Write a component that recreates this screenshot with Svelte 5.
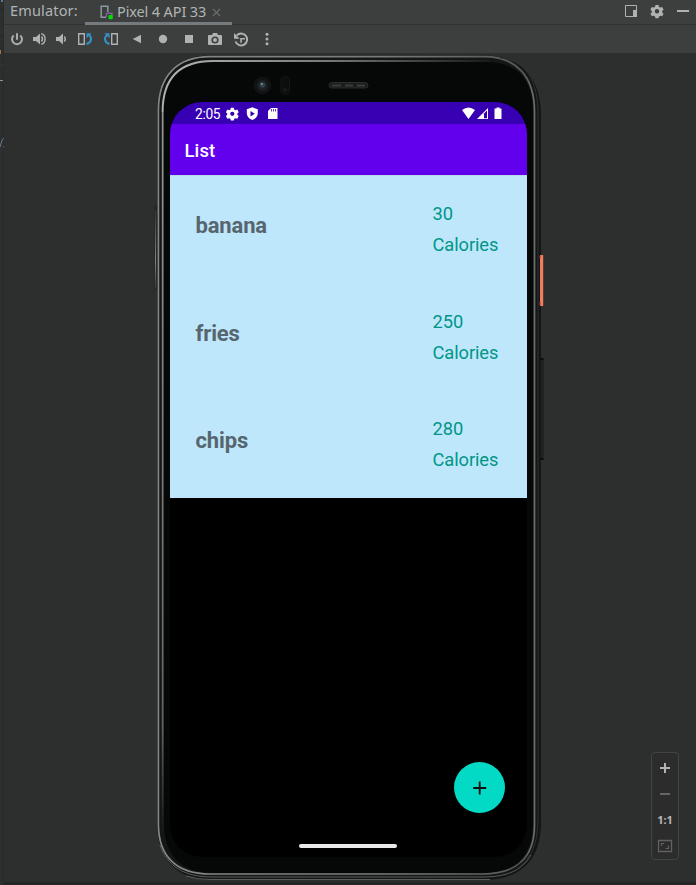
<script>
  const foods = [
    { name: 'banana', calories: 30 },
    { name: 'fries', calories: 250 },
    { name: 'chips', calories: 280 }
  ];
  const gear = 'M-1.5-6h3l.5 1.9 1.2.7 1.9-.6 1.5 2.6-1.4 1.4v1.4l1.4 1.3-1.5 2.6-1.9-.5-1.2.6-.5 1.9h-3l-.5-1.9-1.2-.6-1.9.5-1.5-2.6 1.4-1.3V0l-1.4-1.4 1.5-2.6 1.9.6 1.2-.7ZM0-1.9A2.2 2.2 0 1 0 0 2.5 2.2 2.2 0 1 0 0-1.9Z';
</script>

<div class="window">
  <aside class="gutter">
    <svg width="4" height="885" viewBox="0 0 4 885">
      <path d="M0 9.500h4M0 36.500h4" stroke="#262727" />
      <path d="M0 65h4" stroke="#343636" />
      <path d="M1 0h2v2H1Z" fill="#587991" />
      <path d="M0 50h1v4H0Z" fill="#aa6c44" />
      <path d="M0 80.500h3" stroke="#8c9298" />
      <path d="M0 147l2.500-8M3 138.500h1M3 147h1" fill="none" stroke="#657b91" />
    </svg>
  </aside>
  <main>
    <header>
      <span class="title">Emulator:</span>
      <div class="tab">
        <svg width="14" height="16" viewBox="0 0 14 16">
          <path d="M6 13.300H1.200V2.200h6.600V8" fill="none" stroke="#8d99a1" stroke-width="1.500" />
          <path d="M6.500 13V9.300h5.400V12" fill="none" stroke="#7d6099" stroke-width="1.400" />
          <rect x="8.500" y="11" width="4.300" height="4.300" rx="1" fill="#00df00" />
        </svg>
        <span class="tabname">Pixel 4 API 33</span>
        <svg class="close" width="9" height="9" viewBox="0 0 9 9"><path d="m1 1 7 7m0-7L1 8" stroke="#6b6f70" stroke-width="1.100" /></svg>
      </div>
      <div class="actions">
        <svg viewBox="-13 -12 26 24"><path d="M-5.500-5.500h11v11h-11Z" fill="none" stroke="#afb1b3" /><path d="M2-1h4v7H2Z" fill="#afb1b3" /></svg>
        <svg viewBox="-13 -12 26 24"><path d={gear} fill="#afb1b3" fill-rule="evenodd" /></svg>
        <svg viewBox="-13 -12 26 24"><path d="M-6-1H6V1H-6Z" fill="#afb1b3" /></svg>
      </div>
    </header>

    <div class="toolbar">
      <svg class="narrow" viewBox="-11 -14 22 28"><path d="M-3.300-3.500A5 5 0 1 0 3.300-3.500M0-5.800V.7" fill="none" stroke="#afb1b3" stroke-width="1.900" /></svg>
      <svg class="narrow" viewBox="-11 -14 22 28"><path d="M-6-2h3l4-3.500v11L-3 2h-3Z" fill="#afb1b3" /><path d="M2.500-2.500q2 2.500 0 5M2.300-5.200c5 1 5 9.400 0 10.400" fill="none" stroke="#afb1b3" stroke-width="1.400" /></svg>
      <svg class="narrow" viewBox="-11 -14 22 28"><path d="M-5-2h3l4-3.500v11L-2 2h-3Z" fill="#afb1b3" /><path d="M3.300-2.500q2 2.500 0 5" fill="none" stroke="#afb1b3" stroke-width="1.400" /></svg>
      <svg viewBox="-13 -14 26 28"><path d="M-6.300-5.300h5.600V5.300h-5.600Z" fill="none" stroke="#afb1b3" stroke-width="1.400" /><path d="M1.500 5c5-1.500 5.500-5.500 3-9" fill="none" stroke="#3592c4" stroke-width="2.100" /><path d="M1.500-5.800h5l-5 5Z" fill="#3592c4" /></svg>
      <svg viewBox="-13 -14 26 28"><path d="M6.300-5.300H.7V5.300h5.600Z" fill="none" stroke="#afb1b3" stroke-width="1.400" /><path d="M-1.500 5c-5-1.500-5.500-5.500-3-9" fill="none" stroke="#3592c4" stroke-width="2.100" /><path d="M-1.500-5.800h-5l5 5Z" fill="#3592c4" /></svg>
      <svg viewBox="-13 -14 26 28"><path d="M-4.300 0 4-4.300v8.600Z" fill="#afb1b3" /></svg>
      <svg viewBox="-13 -14 26 28"><circle r="4.200" fill="#afb1b3" /></svg>
      <svg viewBox="-13 -14 26 28"><path d="M-4-4h8v8h-8Z" fill="#afb1b3" /></svg>
      <svg viewBox="-13 -14 26 28"><path d="M-6-4h3l1-2h4l1 2h3q1 0 1 1v8q0 1-1 1H-6q-1 0-1-1v-8q0-1 1-1ZM0-2.600A3.600 3.600 0 1 0 0 4.600 3.600 3.600 0 1 0 0-2.600Z" fill="#afb1b3" fill-rule="evenodd" /><circle cy="1" r="2" fill="#afb1b3" /></svg>
      <svg viewBox="-13 -14 26 28"><path d="M-4.400-3.500A6 6 0 1 1-5.500 2.500" fill="none" stroke="#afb1b3" stroke-width="1.900" /><path d="M-7-6v5.700h5.700ZM-.8-1h4.800V.6H.8v3.200H-.8Z" fill="#afb1b3" /></svg>
      <svg viewBox="-13 -14 26 28"><g fill="#afb1b3"><circle cy="-4.700" r="1.500" /><circle r="1.500" /><circle cy="4.700" r="1.500" /></g></svg>
    </div>

    <section class="stage">
      <div class="phone">
        <svg class="shell" width="392" height="828" viewBox="153 54 392 828">
          <defs>
            <linearGradient id="edge" gradientUnits="userSpaceOnUse" x1="157" y1="0" x2="540" y2="0"><stop stop-color="#858787" /><stop offset=".6" stop-color="#777979" /><stop offset=".95" stop-color="#55585a" /><stop offset="1" stop-color="#747677" /></linearGradient>
            <linearGradient id="inner" gradientUnits="userSpaceOnUse" x1="160" y1="60" x2="470" y2="150"><stop stop-color="#b5b6b6" /><stop offset=".5" stop-color="#777979" /><stop offset="1" stop-color="#151616" /></linearGradient>
            <linearGradient id="rail" x1="0" y1="0" x2="0" y2="1"><stop stop-color="#949696" /><stop offset=".85" stop-color="#626464" /><stop offset="1" stop-color="#111313" /></linearGradient>
            <linearGradient id="side" x1="0" y1="0" x2="0" y2="1"><stop stop-color="#343636" /><stop offset=".65" stop-color="#828484" /><stop offset="1" stop-color="#3b3d3d" /></linearGradient>
          </defs>
          <path d="M155.500 205v84" stroke="#232424" stroke-width="2" />
          <rect x="155" y="210" width="1" height="78" fill="url(#side)" />
          <path d="M157 112C157 76 175 55.500 210 55.500H484C521 55.500 541 77 541 116V822C541 861 520 880 482 880H212C177 880 157 860 157 822Z" fill="#141616" />
          <path d="M164 112C164 80 180 62 212 62H485C518 62 533 80 533 112V822C533 855 517 873 483 873H213C180 873 164 854 164 822Z" fill="#060707" />
          <path d="M158.400 824V110C158.400 76 177 56.600 210 56.600H484C517 56.600 534.500 77 534.500 112V825C534.500 857 517 874 483 874H210C177 874 158.400 857 158.400 824Z" fill="none" stroke="url(#edge)" stroke-width="1.700" />
          <path d="M162.600 112C162.600 79 179 61 213 61H490" fill="none" stroke="url(#inner)" stroke-width="1.900" />
          <rect x="161.800" y="112" width="1.700" height="725" fill="url(#rail)" />
          <path d="M160 845C167 866 184 877 212 877H483C509 877 523 869 531 855M186 876Q197 879.500 210 879.500H490" fill="none" stroke="#5b5d5d" />
          <path d="M500 58C526 60 538 81 538 114V822Q538 855 516 870" fill="none" stroke="#303232" />
          <circle cx="262.500" cy="85.500" r="9" fill="#101213" /><circle cx="262.500" cy="85.500" r="5.500" fill="#1c2022" /><circle cx="262.500" cy="85" r="2.700" fill="#30434d" /><circle cx="261.700" cy="84" r="1" fill="#83939d" />
          <rect x="281" y="76.500" width="8.500" height="18" rx="4" fill="#0c0d0d" stroke="#141617" /><circle cx="285" cy="90" r="2.500" fill="#151718" />
          <rect x="329" y="82.500" width="39" height="5.500" rx="2.700" fill="#1b1d1d" stroke="#2b2e2e" />
          <path d="M332 85.500h9m4 0h8m4 0h8" fill="none" stroke="#3a3d3d" stroke-width="2" />
          <rect x="540" y="255" width="3.200" height="51" rx=".5" fill="#ee7c5d" /><path d="M540 256v2m0 44v3" stroke="#b53732" />
          <rect x="541" y="359.500" width="2" height="100" fill="#292b2b" stroke="#191b1b" /><path d="M540.500 359h3m-3 100h3" stroke="#0b0c0c" stroke-width="2" />
        </svg>
        <div class="screen">
          <div class="status">
            <span class="time">2:05</span>
            <svg width="57" height="22" viewBox="224 102 57 22">
              <path d={gear} transform="translate(232.300 113.500) scale(.97)" fill="#fff" fill-rule="evenodd" />
              <path d="m252.300 107.300 5.500 2v4q0 4.500-5.500 6.700-5.500-2.200-5.500-6.700v-4Zm-1.800 3.700v5.500l4.300-2.700Z" fill="#fff" fill-rule="evenodd" />
              <path d="M271 108h6q.5 0 .5.500V119h-9.500v-8Z" fill="#fff" /><path d="M271.500 109v2.500m2-2.500v2.500m2-2.500v2.500" stroke="#3700b3" stroke-width=".8" />
            </svg>
            <svg class="signals" width="44" height="22" viewBox="460 102 44 22">
              <path d="M462 110q6.500-5 13 0l-6.500 9Z" fill="#fff" />
              <path d="M477 119 488 108v11Z" fill="#fff" /><path d="m484 113.500 3-3v7.700h-3Z" fill="#3700b3" />
              <path d="M494.500 108.500h2V107.500h3v1h2V119h-7Z" fill="#fff" />
            </svg>
          </div>
          <div class="appbar">List</div>
          <div class="list">
            {#each foods as food}
              <div class="row">
                <strong>{food.name}</strong>
                <div class="calories">{food.calories}<br />Calories</div>
              </div>
            {/each}
          </div>
          <div class="empty">
            <div class="fab"><svg width="14" height="14" viewBox="0 0 14 14"><path d="M6.700 .5v13M.2 7h13" stroke="#111" stroke-width="1.900" /></svg></div>
            <div class="home"></div>
          </div>
        </div>
      </div>
      <div class="zoom">
        <svg viewBox="-13 -13 26 26"><path d="M-5 0H5M0-5V5" stroke="#b1b3b4" stroke-width="2" /></svg>
        <svg viewBox="-13 -13 26 26"><path d="M-5 0H5" stroke="#656767" stroke-width="2" /></svg>
        <span>1:1</span>
        <svg viewBox="-13 -13 26 26"><path d="M-6.500-5.500h13v11h-13Z" fill="none" stroke="#606262" stroke-width="1.300" /><path d="M-3.500 0v-2.500h2.500m4.500 2v3h-3" fill="none" stroke="#606262" stroke-width="1.200" /></svg>
      </div>
    </section>
  </main>
</div>

<style>
  .window { display: flex; width: 696px; height: 885px; overflow: hidden; background: #2d2f2e; font-family: Roboto, sans-serif; }
  svg { display: block; flex: none; }
  .gutter { width: 4px; flex: none; background: #2d2f2f; box-shadow: inset -1px 0 #282a2a; }
  main { width: 692px; display: flex; flex-direction: column; }
  header { height: 25px; flex: none; box-sizing: border-box; border-bottom: 1px solid #303232; background: #3c3f3e; display: flex; font: 14px/22px "Noto Sans", sans-serif; color: #b1b4b5; }
  .title { width: 81px; box-sizing: border-box; padding-left: 6px; font-size: 14.500px; line-height: 21px; letter-spacing: .16px; white-space: nowrap; }
  .tab { width: 147px; height: 25px; box-sizing: border-box; border-bottom: 3px solid #747a7e; display: flex; align-items: center; padding-left: 15px; }
  .tab > svg:first-child { margin-top: 2px; }
  .tabname { width: 94px; margin-left: 3px; margin-top: -1px; white-space: nowrap; font-size: 14.500px; letter-spacing: -.13px; }
  .close { margin-left: 1px; margin-top: 2px; }
  .actions { display: flex; margin-left: auto; }
  .actions svg { width: 26px; height: 24px; margin-top: -1px; }
  .toolbar { height: 28px; flex: none; display: flex; padding-left: 2px; background: #3c3f3e; }
  .toolbar svg { width: 26px; height: 28px; }
  .toolbar .narrow { width: 22px; }
  .stage { height: 832px; display: flex; align-items: flex-start; box-sizing: border-box; border-bottom: 3px solid #242626; }
  .phone { width: 392px; height: 828px; margin: 1px 0 0 149px; position: relative; flex: none; }
  .shell { position: absolute; inset: 0; }
  .screen { position: relative; width: 357px; height: 755px; margin: 48px 0 0 17px; border-radius: 32px; overflow: hidden; background: #000; display: flex; flex-direction: column; }
  .status { height: 22px; display: flex; background: #3700b3; color: #fff; flex: none; }
  .time { width: 54px; box-sizing: border-box; padding-left: 25px; font-size: 13.800px; letter-spacing: -.35px; line-height: 24px; white-space: nowrap; }
  .signals { margin-left: auto; margin-right: 23px; }
  .appbar { height: 51px; flex: none; box-sizing: border-box; padding-left: 14.500px; background: #6200ee; color: #fff; font-weight: 500; font-size: 18.500px; line-height: 55px; letter-spacing: .1px; }
  .list { height: 323px; flex: none; display: flex; flex-direction: column; background: #bee7fc; box-shadow: inset 0 1px #b5dbe9; }
  .row { flex: 1; display: flex; align-items: center; padding: 0 25.500px; }
  .row strong { width: 237px; color: #57666e; font-size: 22px; line-height: 26px; letter-spacing: -.15px; padding-bottom: 6px; }
  .calories { color: #009688; font-size: 18.300px; letter-spacing: -.08px; line-height: 31px; }
  .empty { flex: 1; display: flex; flex-direction: column; align-items: flex-end; }
  .fab { width: 51px; height: 51px; border-radius: 50%; margin: 264px 22px 0 0; background: #03dac5; display: grid; place-items: center; }
  .home { width: 98px; height: 4px; border-radius: 2px; background: #e9e9e9; margin: 31px 130px 0 0; }
  .zoom { width: 28px; height: 108px; box-sizing: border-box; margin: 699px 17px 0 auto; padding-top: 2px; border: 1px solid #424444; border-radius: 4px; background: #2b2c2b; display: flex; flex-direction: column; align-items: center; }
  .zoom svg, .zoom span { width: 26px; height: 26px; }
  .zoom span { color: #b5b7b7; font: bold 11px/26px "Noto Sans", sans-serif; text-align: center; }
</style>
